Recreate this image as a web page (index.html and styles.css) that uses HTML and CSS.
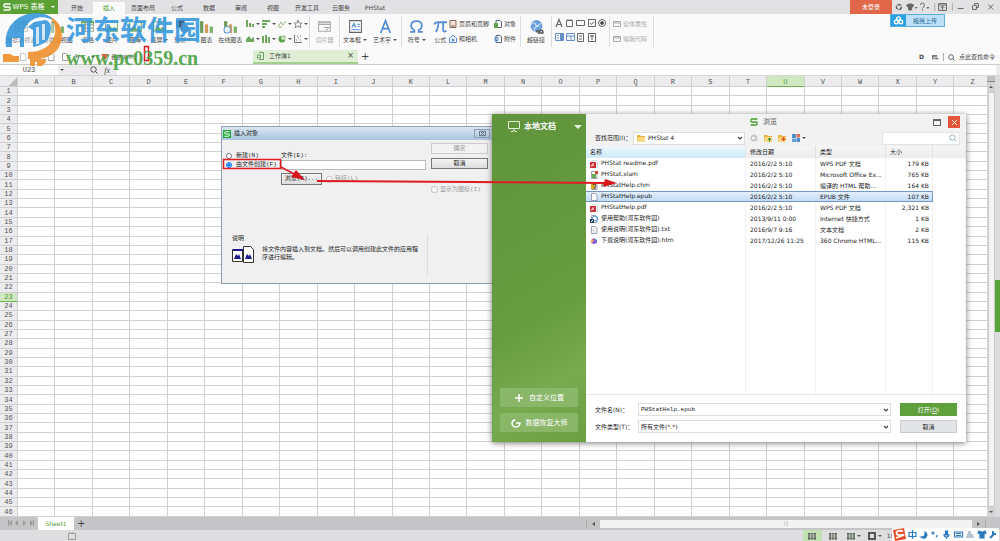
FILE: index.html
```
<!DOCTYPE html>
<html lang="zh">
<head>
<meta charset="utf-8">
<title>WPS 表格</title>
<link rel="stylesheet" href="styles.css">
</head>
<body>
<svg class="defs" aria-hidden="true">
  <symbol id="bars" viewBox="0 0 14 14"><path fill="#6d9c5e" d="M1 2h3v11H1z"/><path fill="#d29a5b" d="M5.500 5h3v8h-3z"/><path fill="#7cb069" d="M10 7h3v6h-3z"/></symbol>
  <symbol id="mini" viewBox="0 0 8 8"><path fill="#6fa75e" d="M0 0h2v7H0zM3 3h2v4H3zM6 4h2v3H6z"/></symbol>
  <symbol id="hbars" viewBox="0 0 8 8"><path fill="#6fa75e" d="M0 0h8v2H0zM0 3h5v2H0zM0 6h3v2H0z"/></symbol>
  <symbol id="line" viewBox="0 0 8 8"><path fill="none" stroke="#8fb883" d="M0 7L3 2L5 5L8 1M1 7h3"/></symbol>
  <symbol id="radar" viewBox="0 0 8 8"><path fill="none" stroke="#888" d="M4 0L5 3H8L6 5L7 8L4 6L1 8L2 5L0 3H3z"/></symbol>
  <symbol id="area" viewBox="0 0 8 8"><path fill="#6fa75e" d="M0 7V4L3 1L5 4L8 2V7z"/></symbol>
  <symbol id="stock" viewBox="0 0 8 8"><path fill="#6fa75e" d="M0 1h2v7H0zM3 0h2v8H3zM6 2h2v6H6z"/></symbol>
  <symbol id="pie" viewBox="0 0 8 8"><path fill="#5fa04a" d="M3.500 .5V4.500H7.500A3.500 3.500 0 1 1 3.500 .5z"/><path fill="#a4cc95" d="M4.500 0A3.500 3.500 0 0 1 8 3.500H4.500z"/></symbol>
  <symbol id="scatter" viewBox="0 0 8 8"><path stroke="#777" fill="none" d="M.5 0V7.500H8M2 5h1M4 3h1M6 5h1M6 1h1M3 1h1"/></symbol>
  <symbol id="pic" viewBox="0 0 14 14"><path fill="#fff" stroke="#7fae74" d="M1.500 2.500h11v9h-11z"/><path fill="#69a85a" d="M2 11l3-5 3 3 2-2 2 4z"/></symbol>
  <symbol id="grid" viewBox="0 0 14 14"><path fill="#fff" stroke="#9aa998" d="M1.500 2.500h11v9h-11zM1.500 5.500h11M1.500 8.500h11M5 3v8M9 3v8"/><path fill="#69a85a" d="M1 2h12v2H1z"/></symbol>
  <symbol id="page" viewBox="0 0 8 8"><path fill="#fff" stroke="#889" stroke-width=".8" d="M1.500 .5h4L7 2v5.500H1.500z"/></symbol>
  <symbol id="folder" viewBox="0 0 8 8"><path fill="#e6b33c" d="M0 1h3l1 1h4v5.500H0z"/><path fill="#f9dc80" d="M1 3h7v4.500H0z"/></symbol>
  <symbol id="pdf" viewBox="0 0 8 8"><path fill="#fff" stroke="#bbb" stroke-width=".6" d="M2.500 .3h3.500l1.500 1.500v5.900h-5z"/><path fill="#cf3038" d="M0 2h6v6H0z"/><path fill="none" stroke="#fff" stroke-width=".7" d="M1 6.500L3 3.500L3.500 5.500H1.500"/></symbol>
  <symbol id="wps" viewBox="0 0 8 8"><path fill="none" stroke="currentColor" stroke-width="1.300" d="M7.500 1H2Q.8 1 .8 2.500T2 4H6Q7.200 4 7.200 5.500T6 7H.5"/></symbol>
  <symbol id="chev" viewBox="0 0 6 6"><path fill="none" stroke="#444" stroke-width="1.200" d="M1 2l2 2 2-2"/></symbol>
  <symbol id="mag" viewBox="0 0 8 8"><circle cx="3.500" cy="3.500" r="2.700" fill="none" stroke="currentColor" stroke-width=".9"/><path stroke="currentColor" d="M5.500 5.500L7.500 7.500"/></symbol>
  <symbol id="cal" viewBox="0 0 8 8"><path fill="#555" d="M0 1h8v6.500H0z"/><path stroke="#cfe6c4" stroke-width=".7" d="M0 3h8M0 5h8M2.700 1v7M5.300 1v7"/></symbol>
</svg>

<header class="titlebar">
  <button class="brand"><svg><use href="#wps"/></svg>WPS 表格<i class="caret"></i></button>
  <nav class="tabs">
    <a href="#">开始</a><a href="#" class="on">插入</a><a href="#" class="wide">页面布局</a><a href="#">公式</a><a href="#">数据</a><a href="#">审阅</a><a href="#">视图</a><a href="#" class="wide">开发工具</a><a href="#">云服务</a><a href="#" class="wide">PHStat</a>
  </nav>
  <button class="login">未登录</button>
  <div class="winctl">
    <svg viewBox="0 0 110 14"><g fill="none" stroke="#666"><circle cx="7" cy="7" r="2.500" stroke-width="1.500" stroke-dasharray="4 1"/><path fill="#666" d="M15 5l2-1h3l2 1-1 2h-1v3h-3V7h-1z"/><path d="M29 5q0-2 2-2t2 2-2 3M31 9v1.500" /><path fill="#666" stroke="none" d="M23 7h3l-1.500 2zM35 7h3l-1.500 2z"/><path stroke="#aaa" d="M43.500 3v8M61.500 3v8"/><path d="M47.500 3.500h8v7h-8zM47.500 5h8M51.500 10V6.500M49.500 8l2-2 2 2M67 8.500h6M83 5.500h3v4h-4v-4M84 5v-1.500h4v4h-2M98 4.500l5 5M103 4.500l-5 5"/></g></svg>
  </div>
</header>

<section class="ribbon">
  <div class="group first">
    <button><svg><use href="#grid"/></svg>数据透视表</button>
    <button><svg><use href="#bars"/></svg>数据透视图</button>
    <button class="s"><svg><use href="#grid"/></svg>表格</button>
    <button class="s"><svg><use href="#pic"/></svg>图片</button>
    <button class="s"><svg><use href="#pic"/></svg>图库</button>
    <button class="s"><svg><use href="#pic"/></svg><span>截屏<i class="caret"></i></span></button>
    <button class="s"><svg viewBox="0 0 14 14"><path fill="#456" d="M1 1h8v7H1z"/><circle cx="9" cy="9" r="4" fill="#5b93cf"/></svg><span>形状<i class="caret"></i></span></button>
    <button class="s"><svg><use href="#bars"/></svg>图表</button>
    <button class="s"><svg viewBox="0 0 14 14"><use href="#bars"/><circle cx="4" cy="10" r="3" fill="#eef4fb" stroke="#6b9fd8"/></svg>在线图表</button>
  </div>
  <div class="group charts">
    <button aria-label="柱形图"><svg><use href="#mini"/></svg><i class="caret"></i></button>
    <button aria-label="条形图"><svg><use href="#hbars"/></svg><i class="caret"></i></button>
    <button aria-label="折线图"><svg><use href="#line"/></svg><i class="caret"></i></button>
    <button aria-label="雷达图"><svg><use href="#radar"/></svg><i class="caret"></i></button>
    <button aria-label="面积图"><svg><use href="#area"/></svg><i class="caret"></i></button>
    <button aria-label="股价图"><svg><use href="#stock"/></svg><i class="caret"></i></button>
    <button aria-label="饼图"><svg><use href="#pie"/></svg><i class="caret"></i></button>
    <button aria-label="散点图"><svg><use href="#scatter"/></svg><i class="caret"></i></button>
  </div>
  <div class="group slicer"><button class="off" disabled><svg viewBox="0 0 14 14"><path fill="none" stroke="#aaa" d="M1.500 2.500h11v9h-11zM1 5h12M6 8h5L9 10v2"/><path fill="#bbb" d="M1 2h12v2H1z"/></svg>切片器</button></div>
  <div class="group text">
    <button><svg viewBox="0 0 14 14"><path fill="#fff" stroke="#666" d="M1.500 1.500h11v11h-11z"/><path fill="none" stroke="#5b93cf" d="M3.500 8l2-4 2 4M4 6.500h3M9 5h2M9 7h2M3 10h8"/></svg><span>文本框<i class="caret"></i></span></button>
    <button><svg viewBox="0 0 14 14"><path fill="none" stroke="#4b8bd0" stroke-width="1.500" d="M2.500 13L7 1.500L11.500 13M4 9h6"/></svg><span>艺术字<i class="caret"></i></span></button>
  </div>
  <div class="group symbols">
    <button><svg viewBox="0 0 14 14"><path fill="none" stroke="#5b8fd0" stroke-width="1.700" d="M1 12h4V10.500Q2 9 2 6Q2 2 7 2T12 6Q12 9 9 10.500V12h4"/></svg><span>符号<i class="caret"></i></span></button>
    <button class="n"><svg viewBox="0 0 14 14"><path fill="none" stroke="#5b8fd0" stroke-width="1.700" d="M1 5Q2 3 4 3H13M5 3Q5 9 2.500 12M9.500 3V10Q9.500 13 12.500 11"/></svg>公式</button>
    <div class="pairs">
      <button><svg viewBox="0 0 8 8"><path fill="#f3e3da" stroke="#8a6455" d="M1 .5h6v7H1z"/><path stroke="#8a6455" d="M2 6h4"/></svg>页眉和页脚</button>
      <button><svg viewBox="0 0 8 8"><path fill="#fff" stroke="#567" d="M2 .5h4l1.500 1.500v5.500H2z"/><path fill="#5aa84a" d="M0 3h4v5H0z"/></svg>对象</button>
      <button><svg viewBox="0 0 8 8"><path fill="none" stroke="#5b8fd0" d="M.5 3L4 .5L7.500 3v4.500h-7z"/><circle cx="4" cy="5" r="1.500" fill="#5b8fd0"/></svg>照相机</button>
      <button><svg viewBox="0 0 8 8"><path fill="#fff" stroke="#567" d="M2 .5h4l1.500 1.500v5.500H2z"/><path fill="none" stroke="#4a86d0" d="M1 2.500h3v3H1z"/></svg>附件</button>
    </div>
  </div>
  <div class="group link"><button><svg viewBox="0 0 14 14"><circle cx="7" cy="6.500" r="5.500" fill="#6b9fd8"/><path fill="none" stroke="#d9e9f7" d="M2 5q3-3 4 0t5-1M5 11q-1-4 4-4"/><path fill="none" stroke="#555" stroke-width="1.300" d="M7 12.500q0-1.500 1.500-1.500T10 12.500M10 12q0-1.500 1.500-1.500T13 12v1h-5"/></svg>超链接</button></div>
  <div class="group controls">
    <svg viewBox="0 0 52 26"><g fill="none" stroke="#666"><path stroke-width="1.200" d="M1 9L4 1.500L7 9M2 6.500h4"/><path d="M11.500 2.500h6v6h-6zM13 1v2M16 1v2M21.500 2.500h8v5h-8zM33.500 1.500h7v7h-7zM35 5l1.500 1.500L39 3.500"/><circle cx="47" cy="5" r="3.500"/><circle cx="47" cy="5" r="1.500" fill="#444"/><path d="M22.500 15.500h6v8h-6zM24 18h3M24 21h3M33.500 15.500h7v8h-7zM35 18h4M37 17v5"/><path stroke="#6490c5" d="M.5 15.500h8v7h-8zM2 17.500h2M2 20h2M11.500 15.500h8v7h-8zM12 18h7M16 18v4"/><path fill="#6490c5" stroke="none" d="M5 16h3v6H5z"/></g></svg>
  </div>
  <div class="group props">
    <button disabled><svg viewBox="0 0 8 8"><path fill="none" stroke="#aaa" d="M.5 1.500h7v5h-7zM1 3h6"/></svg>窗体属性</button>
    <button disabled><svg viewBox="0 0 8 8"><path fill="none" stroke="#aaa" d="M.5 1.500h7v5h-7zM1 3h6"/></svg>编辑代码</button>
  </div>
</section>

<section class="docbar">
  <div class="quick"><svg><use href="#folder"/></svg><svg><use href="#page"/></svg><svg><use href="#page"/></svg><svg><use href="#page"/></svg><svg><use href="#page"/></svg><svg viewBox="0 0 8 8"><path fill="none" stroke="#777" d="M1 4q3-4 6 1M1 1v3h3"/></svg><i class="caret"></i><span class="mywps"><svg viewBox="0 0 8 8"><path fill="#d6674c" d="M0 1h8L4 7z"/></svg>我的WPS</span></div>
  <div class="doctab"><svg viewBox="0 0 8 8"><path fill="none" stroke="#6b9b60" d="M2 .5h4.500v7H2M.5 3h3v3h-3z"/></svg><span>工作簿1</span><button aria-label="关闭">×</button></div>
  <button class="plus" aria-label="新建">+</button>
  <div class="find"><b>D</b><svg viewBox="0 0 8 8"><path fill="#777" d="M0 1h6v2H2v3H0zM3 4h3l2 2H3z"/></svg><i class="sep"></i><svg><use href="#mag"/></svg><span>点此查找命令</span></div>
</section>

<section class="formula">
  <input class="namebox" aria-label="名称框" value="U23"><i class="caret"></i>
  <span class="fx"><svg><use href="#mag"/></svg><em>fx</em></span>
  <input class="fxinput" aria-label="编辑栏">
</section>

<main class="work">
  <div class="sheet"><table class="cells"><thead></thead><tbody></tbody></table></div>
  <div class="vscroll"><i class="split"></i><i class="up"></i><i class="thumb"></i><i class="down"></i></div>
  <div class="edge"><i></i></div>
</main>

<section class="sheetbar">
  <svg class="nav" viewBox="0 0 30 12"><path fill="#999" d="M4 3v6h1V3zM8 3L5 6l3 3zM14 3l-3 3 3 3zM19 3l3 3-3 3zM26 3l3 3-3 3zM29 3v6h1V3z"/></svg>
  <button class="sheettab">Sheet1</button><button class="plus" aria-label="新建工作表">+</button>
  <div class="hscroll"><i class="sep"></i><i class="left"></i><span>|||</span><i class="right"></i><i class="sep"></i></div>
</section>
<footer class="status">
  <svg class="rec" viewBox="0 0 8 8"><path fill="none" stroke="#999" d="M.5 1.500h7v6h-7zM2 0v2M5 0v2"/></svg>
  <div class="views"><button class="on" aria-label="普通"><svg><use href="#cal"/></svg></button><button aria-label="分页"><svg><use href="#cal"/></svg></button><button aria-label="布局"><svg><use href="#cal"/></svg><i class="caret"></i></button><button aria-label="阅读"><svg viewBox="0 0 8 8"><path fill="#ddd" stroke="#555" stroke-width="2" d="M1 1h6v6H1z"/></svg><i class="caret"></i></button><span>100%</span></div>
</footer>

<div class="upload"><svg viewBox="0 0 14 12"><g fill="none" stroke="#fff" stroke-width="1.500"><circle cx="7" cy="4" r="2"/><circle cx="4.500" cy="7.500" r="2"/><circle cx="9.500" cy="7.500" r="2"/></g></svg><button>拖拽上传</button></div>

<div class="ime"><svg viewBox="0 0 105 13"><path fill="#e8502c" d="M1 2L12 0L14 11L3 13z"/><path fill="none" stroke="#fff" stroke-width="1.800" d="M11 3Q4 2 4.500 5T10 7T4 10"/><g fill="none" stroke="#2a78bd" stroke-width="1.200"><path d="M17 4.500h7v4h-7zM20.500 2v9"/><path fill="#2a78bd" d="M33 4q1 5-4 5 5 3 6-2 0-2-2-3z"/><circle cx="41" cy="5" r="1"/><path d="M45 7v1l-1 1"/><path fill="#2a78bd" d="M53.500 3h2v4h-2z"/><path d="M52 6q0 3 2.500 3T57 6M54.500 9v2M62.500 4h8v5h-8zM64 5.500h5M64 7.500h5"/><path fill="#2a78bd" d="M87 3l2 1h2l2-1 1 2-2 1v4h-4V6l-2-1z"/><path stroke-width="2" d="M98 10l4-4M101 3v3h3"/></g><path fill="#b6c4d2" d="M76 3h3v3h2l1 4h-8l1-4h1z"/></svg></div>

<form class="insert" aria-label="插入对象">
  <div class="ititle"><span class="badge"><svg><use href="#wps"/></svg></span>插入对象<button type="button" aria-label="关闭"><svg viewBox="0 0 8 8"><path fill="none" stroke="#567" d="M.5 1.500h7v5h-7zM2 2l4 4M6 2L2 6"/></svg></button></div>
  <div class="ibody">
    <div class="ileft">
      <div class="pick">
        <div class="radios"><label><input type="radio" name="src">新建(N)</label><label><input type="radio" name="src" checked>由文件创建(F)</label></div>
        <div class="file"><label for="path">文件(E):</label><input id="path" type="text"><div class="browse"><button type="button">浏览(B)...</button><label class="dim"><input type="checkbox" disabled>链接(L)</label></div></div>
      </div>
      <div class="note"><h4>说明</h4><svg viewBox="0 0 22 17"><path fill="#fff" stroke="#333" d="M.5 3.500h10v12H.5zM11.500 .5h7l3 3v13h-10z"/><path fill="#1b1b8c" d="M1 3h10v2H1zM2 13l2-5 2 2 1-2 2 5zM13 13l2-5 2 2 1-2 2 5z"/></svg><p>将文件内容插入到文档。然后可以调用创建此文件的应用程序进行编辑。</p></div>
    </div>
    <div class="iright"><button type="button" disabled>确定</button><button type="button">取消</button><label class="dim"><input type="checkbox" disabled>显示为图标(I)</label></div>
  </div>
</form>

<form class="browser" aria-label="浏览">
  <aside><h3><svg viewBox="0 0 12 11"><path fill="none" stroke="#e3f0d9" d="M.5 .5h11v7H.5zM3 10.500h2l1-2 1 2h2"/></svg>本地文档<i class="caret"></i></h3>
    <button type="button"><svg viewBox="0 0 10 10"><path stroke="#fff" stroke-width="1.500" d="M5 1v8M1 5h8"/></svg>自定义位置</button>
    <button type="button"><svg viewBox="0 0 10 10"><path fill="none" stroke="#fff" stroke-width="1.500" d="M4 1.500Q1 3 1 5.500Q1.500 9 5 9T9 5H5"/></svg>数据恢复大师</button>
  </aside>
  <div class="bmain">
    <div class="btitle"><span class="cap"><svg><use href="#wps"/></svg>浏览</span><button type="button" class="max" aria-label="最大化"></button><button type="button" class="close" aria-label="关闭"><svg viewBox="0 0 8 8"><path stroke="#fff" d="M1 1l6 6M7 1L1 7"/></svg></button></div>
    <div class="btools"><label for="dir">查找范围(I)：</label><span class="combo dir"><svg class="lead"><use href="#folder"/></svg><select id="dir"><option>PHStat 4</option></select><svg class="chev"><use href="#chev"/></svg></span>
      <span class="bicons"><svg viewBox="0 0 8 8"><circle cx="4" cy="4" r="3.500" fill="#c4c6ca"/><path fill="none" stroke="#fff" d="M6 4H2l1.500-1.500M2 4l1.500 1.500"/></svg><svg viewBox="0 0 8 8"><use href="#folder"/><path stroke="#3a9a3a" d="M5.500 8V4M4 5.500l1.500-1.500L7 5.500"/></svg><svg viewBox="0 0 8 8"><use href="#folder"/><path stroke="#e0552a" stroke-width="1.500" d="M5.500 3v4M3.500 5h4"/></svg><svg viewBox="0 0 8 8"><path fill="#4e8fd0" d="M0 0h4v4H0zM4.500 4h3.500v4H4.500z"/><path fill="#d8705a" d="M4.500 0H8v3.500H4.500z"/><path fill="#6aa0d8" d="M0 4.500h4V8H0z"/></svg><i class="caret"></i></span>
      <span class="search"><input type="text" aria-label="搜索"><svg><use href="#mag"/></svg></span></div>
    <div class="list"><table>
      <colgroup><col class="c1"><col class="c2"><col class="c3"><col class="c4"><col></colgroup>
      <thead><tr><th class="sorted">名称</th><th>修改日期</th><th>类型</th><th>大小</th><th></th></tr></thead>
      <tbody>
      <tr><td><svg><use href="#pdf"/></svg>PHStat readme.pdf</td><td>2016/2/2 5:10</td><td>WPS PDF 文档</td><td>179 KB</td><td></td></tr>
      <tr><td><svg viewBox="0 0 8 8"><use href="#page"/><path fill="#6aa85a" d="M2 3h4v4H2z"/><path fill="#d04a3a" d="M5 0h3v3H5z"/></svg>PHStat.xlam</td><td>2016/2/2 5:10</td><td>Microsoft Office Ex...</td><td>765 KB</td><td></td></tr>
      <tr><td><svg viewBox="0 0 8 8"><use href="#page"/><path fill="#d9a520" d="M1 1h4v6H1z"/><path fill="none" stroke="#333" d="M3 3q0-2 2-1t0 3v2"/></svg>PHStatHelp.chm</td><td>2016/2/2 5:10</td><td>编译的 HTML 帮助...</td><td>164 KB</td><td></td></tr>
      <tr class="sel"><td><svg><use href="#page"/></svg>PHStatHelp.epub</td><td>2016/2/2 5:10</td><td>EPUB 文件</td><td>107 KB</td><td></td></tr>
      <tr><td><svg><use href="#pdf"/></svg>PHStatHelp.pdf</td><td>2016/2/2 5:10</td><td>WPS PDF 文档</td><td>2,321 KB</td><td></td></tr>
      <tr><td><svg viewBox="0 0 8 8"><use href="#page"/><circle cx="5" cy="3.500" r="2.500" fill="none" stroke="#3a86c8"/><path fill="#246" d="M0 4h4v4H0z"/><path stroke="#fff" d="M1 7l2-2"/></svg>使用帮助(河东软件园)</td><td>2013/9/11 0:00</td><td>Internet 快捷方式</td><td>1 KB</td><td></td></tr>
      <tr><td><svg viewBox="0 0 8 8"><use href="#page"/><path stroke="#9ab" stroke-width=".5" d="M2.500 3h3M2.500 4.500h3M2.500 6h3"/></svg>使用说明(河东软件园).txt</td><td>2016/9/7 9:16</td><td>文本文档</td><td>2 KB</td><td></td></tr>
      <tr><td><svg viewBox="0 0 8 8"><path fill="#e24a7a" d="M1 3l3-2v3z"/><path fill="#4a90e2" d="M4 1l3 2-3 2z"/><path fill="#f2a83a" d="M1 3v3l3-2z"/><path fill="#8a5ad0" d="M4 4l3-1v3l-3 1-3-1z"/></svg>下载说明(河东软件园).htm</td><td>2017/12/26 11:25</td><td>360 Chrome HTML...</td><td>115 KB</td><td></td></tr>
      <tr class="rest"><td></td><td></td><td></td><td></td><td></td></tr>
      </tbody></table></div>
    <div class="bform">
      <label for="fn">文件名(N)：</label><span class="combo"><input id="fn" class="mono" type="text" value="PHStatHelp.epub"><svg class="chev"><use href="#chev"/></svg></span><button type="button" class="open">打开(<u>O</u>)</button>
      <label for="ft">文件类型(T)：</label><span class="combo"><select id="ft"><option>所有文件(*.*)</option></select><svg class="chev"><use href="#chev"/></svg></span><button type="button">取消</button>
    </div>
  </div>
</form>

<svg class="marks" viewBox="0 0 1000 541" aria-hidden="true">
  <g opacity=".92"><circle cx="34" cy="39" r="25" fill="#fff" opacity=".45"/><path fill="#3d9bdc" d="M6 47C3 28 17 13 36 13C46 13 53 17 56 22C48 17 41 16 34 19C29 21 26 26 24 30V47H20V38H12V47z"/><path fill="#3d9bdc" d="M28 27L34 22L45 20C51 21 52 27 50 34C48 42 43 45 33 47V30z"/><path fill="#fff" opacity=".75" d="M36 27h3v17h-3zM42 24h3v16h-3z"/><path fill="#f09434" d="M50 17C60 21 64 32 61 42C58 54 45 61 28 59V52C42 52 52 46 55 34C56 27 54 21 50 17zM30 59h16v3l-4 4h-5v-4h-2v4h-5zM3 54h8v2h8v6H3z"/></g>
  <g fill="none" stroke="#e01b22"><path stroke-width="1.500" d="M223.500 159.500h57v9h-57zM144.500 46.500h4v14h-4z"/><path stroke-width="1.500" d="M281 167L294 174"/><path stroke-width="2" d="M317 181L606 183"/></g>
  <path fill="#d9161c" d="M305 180L291 177L296 170zM617 183L603 187L605 179z"/>
</svg>
<div class="mark"><strong>河东软件园</strong><b>www.pc0359.cn</b></div>
<script src="sheet.js"></script>
</body>
</html>
```
FILE: styles.css
```
* { box-sizing: border-box; }
html, body { height: 100%; margin: 0; }
body { display: flex; flex-direction: column; height: 100vh; overflow: hidden; position: relative; font: 6px/8px "DejaVu Sans", "Noto Sans CJK SC", sans-serif; color: #444; background: #fafafa; }
button, input, select { font: inherit; color: inherit; margin: 0; padding: 0; border: 0; background: none; border-radius: 0; min-width: 0; }
button { display: flex; align-items: center; justify-content: center; white-space: nowrap; }
input { outline: 0; }
select { appearance: none; }
a { color: inherit; text-decoration: none; }
svg { width: 8px; height: 8px; flex: none; }
.defs { display: none; }
.caret { display: inline-block; flex: none; border: 2px solid transparent; border-top-color: #555; border-bottom: 0; margin-left: 2px; vertical-align: middle; }
.sep { width: 1px; height: 8px; background: #aaa; }

.titlebar { display: flex; flex: none; height: 14px; background: #e2e2e4; }
.brand { width: 58px; gap: 2px; background: #5ca136; color: #fff; font-size: 7px; }
.brand .caret { border-top-color: #fff; margin-left: 5px; }
.tabs { display: flex; flex: 1; padding: 2px 0 0 3px; }
.tabs a { width: 32px; line-height: 12px; text-align: center; white-space: nowrap; }
.tabs .wide { width: 36px; }
.tabs .on { background: #fafafa; color: #4f9a30; }
.login { width: 42px; background: #e0674a; color: #fff; }
.winctl { width: 108px; }
.winctl svg { width: 108px; height: 14px; }

.ribbon { display: flex; flex: none; height: 36px; padding-top: 2px; }
.group { display: flex; flex: none; height: 31px; border-right: 1px solid #ddd; }
.group > button { flex-direction: column; gap: 2px; width: 30px; }
.group > button > svg { width: 15px; height: 15px; }
.group button:disabled { color: #aaa; }
.group.first { padding-left: 3px; border: 0; width: 242px; }
.first > button { width: 37px; }
.first > .s { width: 24px; }
.first .caret { margin-left: 1px; }
.group.charts { display: grid; grid-template-columns: repeat(4, 1fr); width: 68px; padding-left: 3px; }
.charts > button { flex-direction: row; gap: 0; width: auto; }
.charts > button > svg { width: 8px; height: 8px; }
.group.slicer { width: 30px; }
.group.text { width: 62px; }
.group.symbols { width: 119px; }
.symbols .n { width: 18px; }
.pairs { display: grid; grid-template-columns: 45px 26px; }
.pairs button, .props button { gap: 2px; justify-content: flex-start; }
.group.link { width: 31px; }
.group.controls { width: 58px; padding: 2px 3px; }
.controls svg { width: 52px; height: 26px; }
.group.props { display: grid; width: 44px; padding-left: 3px; }
.props > button { flex-direction: row; width: 38px; }
.props > button > svg { width: 8px; height: 8px; }

.docbar { display: flex; flex: none; height: 14px; align-items: center; }
.quick { display: flex; gap: 6px; width: 253px; padding-left: 5px; align-items: center; }
.mywps { display: flex; align-items: center; gap: 2px; }
.doctab { display: flex; align-items: center; gap: 4px; width: 105px; height: 14px; padding: 0 4px; background: #deefd6; border-bottom: 2px solid #a3cf91; }
.doctab span { flex: 1; }
.doctab button { font-size: 8px; }
.plus { font-size: 10px; padding: 0 3px; }
.find { display: flex; align-items: center; gap: 4px; margin-left: auto; padding-right: 5px; }
.find svg { width: 7px; height: 7px; }
.find b { margin-right: 4px; }

.formula { display: flex; flex: none; height: 12px; align-items: center; background: #ececee; border-top: 1px solid #ccc; border-bottom: 1px solid #d5d5d5; padding-right: 4px; }
.namebox { width: 58px; height: 100%; text-align: center; background: #fff; font: 7px "Liberation Mono", monospace; }
.fx { display: flex; align-items: center; justify-content: flex-end; gap: 6px; width: 46px; }
.fx em { font: italic 8px "Liberation Serif", serif; }
.fxinput { flex: 1; height: 100%; margin-left: 7px; background: #fff; }

.work { display: flex; flex: 1; min-height: 0; background: #e4e4e6; }
.sheet { flex: 1; overflow: hidden; }
.cells { width: calc(100% + 5px); height: 100%; table-layout: fixed; border-spacing: 0; background: #fff; font: 7px/8px "Liberation Mono", "Noto Sans CJK SC", monospace; color: #555; }
.cells th, .cells td { padding: 0; border: solid #d0d0d2; border-width: 0 1px 1px 0; font-weight: normal; text-align: center; }
.cells th { background: #ececee; }
.cells th:first-child { width: 18px; }
.cells thead th { height: 11px; padding-top: 2px; }
.cells .corner { background: linear-gradient(135deg, #ececee 70%, #bbb 70%); }
.cells th.on { background: #cfe8c2; color: #4f9a30; border-bottom-color: #6fb152; }
.vscroll { display: flex; flex-direction: column; align-items: center; width: 8px; background: #d2d2d4; }
.vscroll .split { width: 8px; height: 6px; background: #c2c2c4; border-bottom: 1px solid #888; }
.up, .down { border: 2px solid transparent; margin: 4px 0; }
.up { border-bottom-color: #555; border-top: 0; }
.down { border-top-color: #555; border-bottom: 0; }
.thumb { flex: 1; width: 7px; background: #f3f3f4; border: 1px solid #ccc; }
.edge { display: flex; align-items: center; width: 5px; background: #dcdcdf; }
.edge i { width: 5px; height: 52px; margin-bottom: -18px; background: #58a336; }

.sheetbar { display: flex; flex: none; height: 13px; background: #c5c5c7; }
.nav { width: 30px; height: 12px; margin: 0 4px; }
.sheettab { width: 36px; background: #fff; color: #4f9a30; }
.hscroll { display: flex; align-items: center; gap: 5px; width: 42%; margin-left: auto; padding: 0 14px 0 6px; }
.hscroll span { flex: 1; height: 8px; background: #f3f3f4; text-align: center; color: #aaa; line-height: 7px; font-size: 5px; }
.left, .right { border: 3px solid transparent; border-width: 2px 3px; }
.left { border-right-color: #555; border-left: 0; }
.right { border-left-color: #555; border-right: 0; }
.status { display: flex; flex: none; height: 11px; align-items: center; justify-content: space-between; background: #dedee0; padding: 0 96px 0 68px; }
.views { display: flex; align-items: center; height: 100%; gap: 2px; }
.views button { width: 19px; height: 100%; }
.views .on { background: #c2e2b3; }

.upload { position: absolute; top: 14px; right: 55px; display: flex; width: 55px; height: 13px; border: 1px solid #5aaee0; background: #bfe1f8; color: #2d6b99; }
.upload svg { width: 15px; height: 11px; background: #2a9ee0; }
.upload button { flex: 1; }
.ime { position: absolute; right: 1px; bottom: 0; width: 107px; height: 13px; background: #fff; }
.ime svg { width: 105px; height: 13px; }

.insert { position: absolute; left: 221px; top: 126px; width: 274px; border: 1px solid #8d9eb0; background: #f0f0f0; color: #222; font-family: "Liberation Mono", "Noto Sans CJK SC", monospace; }
.ititle { display: flex; align-items: center; gap: 3px; height: 13px; padding: 0 4px 0 1px; background: linear-gradient(#dbe7f3, #a9c4de); }
.badge { display: flex; padding: 1px; background: #22a83a; color: #fff; }
.badge svg { width: 6px; height: 6px; }
.ititle button { width: 16px; height: 9px; margin-left: auto; border: 1px solid #8ba0b8; }
.ititle button svg { width: 7px; height: 7px; }
.ibody { display: grid; grid-template-columns: 206px 57px; gap: 3px; padding: 3px 0 7px 0; }
.pick { display: grid; grid-template-columns: 59px 145px; padding-top: 8px; }
.radios label, .dim { display: flex; align-items: center; gap: 4px; height: 9px; white-space: nowrap; }
.radios { padding-left: 4px; }
.radios input { width: 6px; height: 6px; }
.dim { color: #999; gap: 2px; }
.dim input { width: 7px; height: 7px; }
.file > label { display: block; height: 9px; padding-top: 1px; }
.file > input { width: 145px; height: 10px; border: 1px solid #bbb; background: #fff; }
.browse { display: flex; align-items: center; gap: 4px; padding-top: 3px; }
.browse button, .iright button { border: 1px solid #777; background: linear-gradient(#f5f5f5, #ddd); }
.browse button { width: 41px; height: 12px; }
.iright button { width: 57px; height: 11px; margin-bottom: 4px; }
.iright button:disabled { color: #999; border-color: #ccc; background: #f2f2f2; }
.iright .dim { padding-top: 12px; height: 21px; }
.note { display: grid; grid-template-columns: 22px 1fr; gap: 3px 8px; margin-top: 50px; padding: 0 8px 13px 10px; border-right: 1px solid #ddd; }
.note h4 { grid-column: 1 / 3; margin: 0; font-weight: normal; }
.note svg { width: 22px; height: 17px; }
.note p { margin: 0; }

.browser { position: absolute; left: 492px; top: 114px; display: flex; width: 474px; height: 328px; background: #fff; box-shadow: 0 1px 6px #777; color: #222; }
.browser aside { display: flex; flex-direction: column; gap: 6px; width: 94px; padding: 6px 8px 10px; background: linear-gradient(150deg, #60943c, #679c40 60%, #78aa4f 80%, #6b9f43); color: #fff; }
.browser h3 { display: flex; align-items: center; gap: 4px; margin: 0 0 auto 8px; font-size: 8px; line-height: 13px; white-space: nowrap; }
.browser h3 svg { width: 12px; height: 11px; }
.browser h3 .caret { border-width: 4px 4px 0; border-top-color: #e3f0d9; margin: 0 -4px 0 auto; }
.browser aside button { height: 19px; gap: 5px; background: #8ab668; font-size: 7px; }
.browser aside button svg { width: 10px; height: 10px; }
.bmain { display: flex; flex: 1; flex-direction: column; min-width: 0; }
.btitle { display: flex; align-items: center; gap: 7px; height: 16px; padding-right: 6px; background: #f2f2f3; }
.cap { display: flex; align-items: center; gap: 5px; margin: 0 auto 0 164px; font-size: 7px; color: #555; }
.cap svg { color: #46a02e; }
.max { width: 8px; height: 7px; border: 1px solid #666; border-top-width: 2px; }
.close { width: 12px; height: 12px; background: #e45438; }
.close svg { width: 7px; height: 7px; }
.btools { display: flex; align-items: center; height: 16px; padding: 0 6px 0 9px; background: #f2f2f3; }
.btools label { width: 38px; white-space: nowrap; }
.combo { display: flex; align-items: center; height: 13px; border: 1px solid #ddd; background: #fff; }
.combo input, .combo select { flex: 1; height: 11px; padding-left: 2px; }
.combo .chev { width: 6px; height: 6px; margin-right: 1px; }
.combo .lead { margin: 0 1px 0 3px; }
.dir { width: 112px; }
.mono { font-family: "Liberation Mono", monospace; }
.bicons { display: flex; align-items: center; gap: 6px; margin-left: 5px; }
.bicons .caret { margin-left: -4px; }
.search { display: flex; align-items: center; width: 78px; height: 13px; margin-left: auto; padding-right: 2px; background: #fff; border: 1px solid #e3e3e3; color: #8aa6bd; }
.search input { flex: 1; }
.list { display: flex; flex: 1; border-bottom: 1px solid #e2e2e2; }
.list table { flex: 1; width: 100%; height: 100%; table-layout: fixed; border-spacing: 0; }
.c1 { width: 160px; }
.c2, .c3 { width: 70px; }
.c4 { width: 47px; }
.list th { height: 12px; padding: 0 4px; text-align: left; font-weight: normal; background: linear-gradient(#f5f5f6, #ededee); border-right: 1px solid #e3e3e3; }
.list .sorted { background: linear-gradient(#eef8fd, #cdeaf8); }
.list td { height: 11px; padding: 0 0 0 4px; border-right: 1px solid #f1f1f1; white-space: nowrap; }
.list td:nth-child(4) { padding-right: 3px; text-align: right; }
.list td svg { margin-right: 3px; vertical-align: middle; }
.list .sel td { background: linear-gradient(#e5f0fc, #c3dbf6); border: solid #7398c8; border-width: 1px 0; }
.list .sel td:nth-child(4) { border-right-width: 1px; }
.list .sel td:last-child { background: none; border: 0; }
.list .rest td { height: auto; }
.bform { display: grid; grid-template-columns: 52px 1fr 57px; align-items: center; gap: 4px 0; padding: 8px 9px 9px 0; }
.bform label { padding-left: 9px; white-space: nowrap; }
.bform .combo { margin-right: 9px; }
.bform button { height: 13px; background: #e3e4e8; border: 1px solid #cacbd0; }
.bform .open { background: #5f9f3c; border-color: #5f9f3c; color: #fff; }

.marks { position: absolute; left: 0; top: 0; width: 1000px; height: 541px; pointer-events: none; }
.mark { position: absolute; left: 66px; top: 12px; display: flex; flex-direction: column; pointer-events: none; opacity: .9; }
.mark strong { font: bold 27px/34px "Noto Sans CJK SC", sans-serif; color: #3a9ae0; }
.mark b { font: bold 20px/24px "Liberation Serif", serif; color: #4aa143; }
```
FILE: sheet.js
```
const table = document.querySelector('.cells');
const letters = 'ABCDEFGHIJKLMNOPQRSTUVWXYZ'.split('');
table.tHead.innerHTML = '<tr><th class="corner"></th>' +
  letters.map(l => `<th${l === 'U' ? ' class="on"' : ''}>${l}</th>`).join('') + '</tr>';
let rows = '';
for (let r = 1; r <= 46; r++) {
  rows += `<tr><th${r === 23 ? ' class="on"' : ''}>${r}</th>${'<td></td>'.repeat(26)}</tr>`;
}
table.tBodies[0].innerHTML = rows;
```
